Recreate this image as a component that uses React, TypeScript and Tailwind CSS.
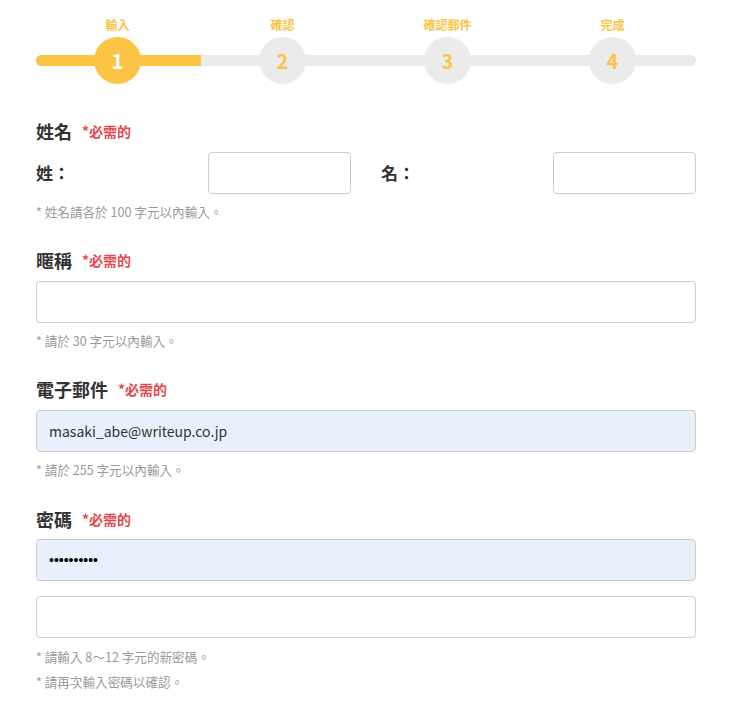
import React from 'react'

const steps = [
  { label: '輸入', num: 1, active: true },
  { label: '確認', num: 2, active: false },
  { label: '確認郵件', num: 3, active: false },
  { label: '完成', num: 4, active: false },
]

function Required() {
  return <span className="ml-[10px] text-[14px] font-bold text-[#e5484d]">*必需的</span>
}

function Heading({ children }: { children: React.ReactNode }) {
  return (
    <div className="flex items-center h-[26px]">
      <span className="text-[18px] font-bold text-[#333]">{children}</span>
      <Required />
    </div>
  )
}

function Hint({ children, className = '' }: { children: React.ReactNode; className?: string }) {
  return <p className={`text-[12.6px] leading-[18px] text-[#999] ${className}`}>{children}</p>
}

const inputBase =
  'block w-full h-[42px] rounded-[4px] border border-[#cccccc] px-[12px] text-[14px] text-[#333] outline-none'

export default function App() {
  return (
    <div
      className="w-[737px] min-h-[701px] bg-white pl-[36px] pr-[41px] pt-[17px]"
      style={{ fontFamily: '"Noto Sans CJK TC", "Noto Sans", sans-serif' }}
    >
      {/* Progress */}
      <div className="relative">
        <div className="absolute left-0 right-0 top-[38px] h-[11px] rounded-full bg-[#ebebeb]" />
        <div className="absolute left-0 top-[38px] h-[11px] w-[165px] rounded-l-full bg-[#fbc445]" />
        <div className="relative grid grid-cols-4">
          {steps.map((s) => (
            <div key={s.num} className="flex flex-col items-center -ml-[2px]">
              <span className="h-4 text-[12px] leading-4 font-bold text-[#fbc445]">{s.label}</span>
              <div
                className={`mt-[4px] flex h-[47px] w-[47px] items-center justify-center rounded-full text-[20px] font-bold ${
                  s.active ? 'bg-[#fbc445] text-white' : 'bg-[#ebebeb] text-[#fbc445]'
                }`}
              >
                {s.num}
              </div>
            </div>
          ))}
        </div>
      </div>

      {/* 姓名 */}
      <div className="mt-[34px]">
        <Heading>姓名</Heading>
        <div className="mt-[8px] grid grid-cols-2 gap-[30px]">
          <div className="flex items-center justify-between">
            <span className="text-[17px] font-bold text-[#333]">姓：</span>
            <input className={`${inputBase} !w-[143px]`} />
          </div>
          <div className="flex items-center justify-between">
            <span className="text-[17px] font-bold text-[#333]">名：</span>
            <input className={`${inputBase} !w-[143px]`} />
          </div>
        </div>
        <Hint className="mt-[9px]">* 姓名請各於 100 字元以內輸入。</Hint>
      </div>

      {/* 暱稱 */}
      <div className="mt-[26px]">
        <Heading>暱稱</Heading>
        <input className={`${inputBase} mt-[8px]`} />
        <Hint className="mt-[9px]">* 請於 30 字元以內輸入。</Hint>
      </div>

      {/* 電子郵件 */}
      <div className="mt-[26px]">
        <Heading>電子郵件</Heading>
        <input className={`${inputBase} mt-[8px] bg-[#e8f0fe]`} defaultValue="masaki_abe@writeup.co.jp" />
        <Hint className="mt-[9px]">* 請於 255 字元以內輸入。</Hint>
      </div>

      {/* 密碼 */}
      <div className="mt-[27px] pb-[10px]">
        <Heading>密碼</Heading>
        <input
          type="password"
          className={`${inputBase} mt-[7px] bg-[#e8f0fe] text-black font-['Liberation_Sans',sans-serif]`}
          defaultValue="abcdefghij"
        />
        <input type="password" className={`${inputBase} mt-[15px] font-['Liberation_Sans',sans-serif]`} />
        <Hint className="mt-[10px]">* 請輸入 8～12 字元的新密碼。</Hint>
        <Hint className="mt-[7px]">* 請再次輸入密碼以確認。</Hint>
      </div>
    </div>
  )
}
